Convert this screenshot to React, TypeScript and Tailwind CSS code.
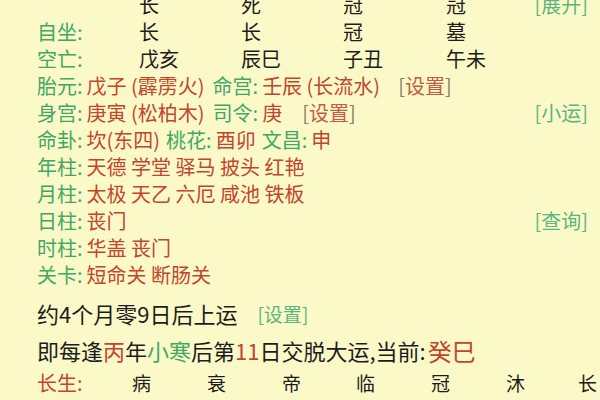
import React from "react";

const green = "text-[#3fa865]";
const red = "text-[#c2452e]";
const ink = "text-[#1c1c1c]";

function Label({ children, className = green }: { children: React.ReactNode; className?: string }) {
  return <span className={className}>{children}:</span>;
}

function Bracket({ children, color = "green" }: { children: React.ReactNode; color?: "green" | "red" }) {
  if (color === "red") {
    return (
      <span className="text-[#8c7b5e]">
        [<span className="text-[#c25a45]">{children}</span>]
      </span>
    );
  }
  return <span className="text-[#5cb47f]">[{children}]</span>;
}

function GridRow({ label, cells, right }: { label?: string; cells: string[]; right?: React.ReactNode }) {
  return (
    <div className="grid grid-cols-[102px_102px_102px_103px_1fr_auto] h-[27px] items-center">
      <span>{label ? <Label>{label}</Label> : null}</span>
      {cells.map((c, i) => (
        <span key={i} className={ink}>
          {c}
        </span>
      ))}
      <span>{right}</span>
    </div>
  );
}

function Row({ children }: { children: React.ReactNode }) {
  return <div className="flex items-center h-[27px] whitespace-nowrap">{children}</div>;
}

export default function App() {
  return (
    <div
      className="w-[600px] h-[400px] overflow-hidden bg-[#fcf9c9] text-[20px] leading-[27px]"
      style={{ fontFamily: '"Noto Sans CJK SC", "Noto Sans", sans-serif' }}
    >
      <div className="-mt-[9px] pl-[37px] pr-[12px]">
        <GridRow cells={["长", "死", "冠", "冠"]} right={<Bracket>展开</Bracket>} />
        <GridRow label="自坐" cells={["长", "长", "冠", "墓"]} />
        <GridRow label="空亡" cells={["戊亥", "辰巳", "子丑", "午未"]} />
        <Row>
          <Label>胎元</Label>
          <span className={`${red} ml-[4px]`}>戊子 (霹雳火)</span>
          <span className="ml-[8px]">
            <Label>命宫</Label>
          </span>
          <span className={`${red} ml-[4px]`}>壬辰 (长流水)</span>
          <span className="ml-[18px]">
            <Bracket color="red">设置</Bracket>
          </span>
        </Row>
        <Row>
          <Label>身宫</Label>
          <span className={`${red} ml-[4px]`}>庚寅 (松柏木)</span>
          <span className="ml-[8px]">
            <Label>司令</Label>
          </span>
          <span className={`${red} ml-[4px]`}>庚</span>
          <span className="ml-[20px]">
            <Bracket color="red">设置</Bracket>
          </span>
          <span className="ml-auto">
            <Bracket>小运</Bracket>
          </span>
        </Row>
        <Row>
          <Label>命卦</Label>
          <span className={`${red} ml-[4px]`}>坎(东四)</span>
          <span className="ml-[6px]">
            <Label>桃花</Label>
          </span>
          <span className={`${red} ml-[4px]`}>酉卯</span>
          <span className="ml-[6px]">
            <Label>文昌</Label>
          </span>
          <span className={`${red} ml-[4px]`}>申</span>
        </Row>
        <Row>
          <Label>年柱</Label>
          <span className={`${red} ml-[4px]`}>天德 学堂 驿马 披头 红艳</span>
        </Row>
        <Row>
          <Label>月柱</Label>
          <span className={`${red} ml-[4px]`}>太极 天乙 六厄 咸池 铁板</span>
        </Row>
        <Row>
          <Label>日柱</Label>
          <span className={`${red} ml-[4px]`}>丧门</span>
          <span className="ml-auto">
            <Bracket>查询</Bracket>
          </span>
        </Row>
        <Row>
          <Label>时柱</Label>
          <span className={`${red} ml-[4px]`}>华盖 丧门</span>
        </Row>
        <Row>
          <Label>关卡</Label>
          <span className={`${red} ml-[4px]`}>短命关 断肠关</span>
        </Row>

        <div className="flex items-center h-[37px] mt-[7px] whitespace-nowrap">
          <span className={`${ink} text-[22px]`}>约4个月零9日后上运</span>
          <span className="ml-[20px] text-[19px]">
            <Bracket>设置</Bracket>
          </span>
        </div>
        <div className={`flex items-center h-[37px] whitespace-nowrap text-[22px] ${ink}`}>
          <span>
            即每逢<span className={red}>丙</span>年<span className={green}>小寒</span>后第
            <span className={red}>11</span>日交脱大运,当前:
          </span>
          <span className={`${red} text-[24px] ml-[2px]`}>癸巳</span>
        </div>
        <div className="grid grid-cols-[95px_75px_75px_74px_75px_75px_72px_auto] h-[26px] items-center text-[19px]">
          <span className="text-[#c2452e] text-[20px]">长生:</span>
          {["病", "衰", "帝", "临", "冠", "沐", "长"].map((c, i) => (
            <span key={i} className={ink}>
              {c}
            </span>
          ))}
        </div>
      </div>
    </div>
  );
}
